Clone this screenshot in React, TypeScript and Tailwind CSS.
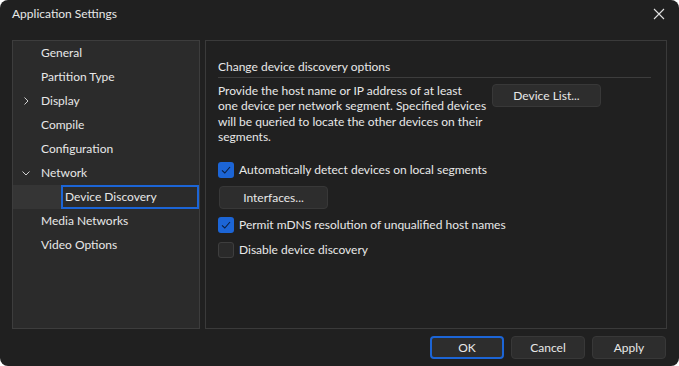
import React from 'react'

const treeItems = [
  { label: 'General' },
  { label: 'Partition Type' },
  { label: 'Display', chevron: 'right' },
  { label: 'Compile' },
  { label: 'Configuration' },
  { label: 'Network', chevron: 'down' },
  { label: 'Device Discovery', child: true, selected: true },
  { label: 'Media Networks' },
  { label: 'Video Options' },
]

const Chevron = ({ dir }: { dir: string }) => (
  <svg width="10" height="10" viewBox="0 0 10 10" className="text-[#d0d0d0]">
    {dir === 'right' ? (
      <path d="M3.5 1.5 L7 5 L3.5 8.5" fill="none" stroke="currentColor" strokeWidth="1" />
    ) : (
      <path d="M1.5 3.5 L5 7 L8.5 3.5" fill="none" stroke="currentColor" strokeWidth="1" />
    )}
  </svg>
)

const Checkbox = ({ checked, label }: { checked: boolean; label: string }) => (
  <div className="flex items-center gap-[5px] h-[16px]">
    {checked ? (
      <div className="w-[16px] h-[16px] rounded-[3px] bg-[#1c65d6] flex items-center justify-center">
        <svg width="12" height="12" viewBox="0 0 12 12">
          <path d="M2 6.3 L4.8 9 L10 3" fill="none" stroke="#0b1f3f" strokeWidth="1.1" />
        </svg>
      </div>
    ) : (
      <div className="w-[16px] h-[16px] rounded-[3px] bg-[#2a2a2a] border border-[#3e3e3e]" />
    )}
    <span>{label}</span>
  </div>
)

const Btn = ({
  children,
  className = '',
  primary = false,
}: {
  children: React.ReactNode
  className?: string
  primary?: boolean
}) => (
  <div
    className={`h-[23px] rounded-[4px] bg-[#2d2d2d] flex items-center justify-center ${
      primary ? 'border-2 border-[#1c65d6]' : 'border border-[#383838]'
    } ${className}`}
  >
    {children}
  </div>
)

export default function App() {
  return (
    <div className="w-[679px] h-[366px] bg-white">
      <div
        className="w-full h-full rounded-[8px] bg-[#202020] text-[#e8e8e8] text-[12px] flex flex-col"
        style={{ fontFamily: 'Lato, "Noto Sans", sans-serif' }}
      >
        <div className="h-[40px] flex items-start justify-between pl-[12px] pr-[14px] pt-[5px]">
          <span className="leading-[18px]">Application Settings</span>
          <svg width="12" height="12" viewBox="0 0 12 12" className="mt-[3px]">
            <path d="M1 1 L11 11 M11 1 L1 11" stroke="#e0e0e0" strokeWidth="1.1" />
          </svg>
        </div>

        <div className="flex gap-[5px] px-[12px] h-[289px]">
          <div className="w-[188px] h-full bg-[#2b2b2b] border border-[#3d3d3d]">
            {treeItems.map(item =>
              item.selected ? (
                <div key={item.label} className="h-[24px] flex bg-[#353535]">
                  <div className="w-[48px]" />
                  <div className="flex-1 border-2 border-[#1c65d6] bg-[#2b2b2b] flex items-center pl-[2px]">
                    {item.label}
                  </div>
                </div>
              ) : (
                <div key={item.label} className="h-[24px] flex items-center">
                  <div className="w-[28px] flex pl-[8px]">
                    {item.chevron && <Chevron dir={item.chevron} />}
                  </div>
                  <span>{item.label}</span>
                </div>
              )
            )}
          </div>

          <div className="flex-1 h-full border border-[#3a3a3a] px-[12px] pt-[18px]">
            <div className="pr-[3px]">
              <div className="leading-[16px] pb-[2px] border-b border-[#3d3d3d]">
                Change device discovery options
              </div>
            </div>
            <div className="flex gap-[2px] mt-[5px]">
              <p className="w-[272px] leading-[15.3px] whitespace-nowrap">
                Provide the host name or IP address of at least
                <br />
                one device per network segment. Specified devices
                <br />
                will be queried to locate the other devices on their
                <br />
                segments.
              </p>
              <Btn className="w-[109px] mt-[1px]">Device List...</Btn>
            </div>
            <div className="mt-[18px] flex flex-col">
              <Checkbox checked label="Automatically detect devices on local segments" />
              <Btn className="w-[109px] mt-[8px] ml-[1px]">Interfaces...</Btn>
              <div className="mt-[8px]">
                <Checkbox checked label="Permit mDNS resolution of unqualified host names" />
              </div>
              <div className="mt-[9px]">
                <Checkbox checked={false} label="Disable device discovery" />
              </div>
            </div>
          </div>
        </div>

        <div className="flex justify-end gap-[7px] pr-[13px] pt-[7px]">
          <Btn primary className="w-[74px]">OK</Btn>
          <Btn className="w-[74px]">Cancel</Btn>
          <Btn className="w-[74px]">Apply</Btn>
        </div>
      </div>
    </div>
  )
}
